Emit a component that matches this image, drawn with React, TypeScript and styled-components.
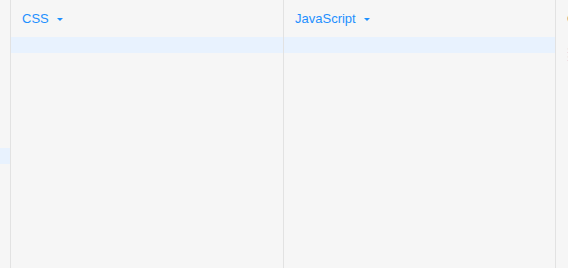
import React from 'react';
import styled, { createGlobalStyle } from 'styled-components';

const GlobalStyle = createGlobalStyle`
  html, body {
    margin: 0;
    padding: 0;
    background: #f6f6f6;
    font-family: "Liberation Sans", Arial, sans-serif;
    overflow: hidden;
  }
`;

const Board = styled.div`
  display: flex;
  width: 568px;
  height: 268px;
  overflow: hidden;
  background: #f6f6f6;
`;

const Strip = styled.div`
  flex: 0 0 10px;
  border-right: 1px solid #e2e2e2;
  display: flex;
  flex-direction: column;
  padding-top: 148px;
`;

const StripMark = styled.div`
  height: 16px;
  background: #e8f2fe;
`;

const Column = styled.div<{ $width: number }>`
  flex: 0 0 ${({ $width }) => $width}px;
  display: flex;
  flex-direction: column;
  border-right: 1px solid #e2e2e2;
  min-width: 0;
`;

const Header = styled.div`
  height: 37px;
  display: flex;
  align-items: center;
  gap: 8px;
  padding-left: 11px;
  font-size: 13px;
  color: #1e90ff;
  white-space: nowrap;
`;

const HeaderMuted = styled(Header)`
  color: #555;
`;

const Caret = styled.span`
  width: 0;
  height: 0;
  border-left: 3px solid transparent;
  border-right: 3px solid transparent;
  border-top: 3px solid #1e90ff;
  margin-top: 1px;
`;

const Row = styled.div<{ $active?: boolean }>`
  height: 16px;
  background: ${({ $active }) => ($active ? '#e8f2fe' : 'transparent')};
`;

const Notes = styled.div`
  display: flex;
  flex-direction: column;
  padding: 10px 0 0 11px;
  font-size: 8px;
  line-height: 8px;
  color: #9b8cc9;
  white-space: nowrap;
`;

export default function App() {
  return (
    <>
      <GlobalStyle />
      <Board>
        <Strip>
          <StripMark />
        </Strip>
        <Column $width={272}>
          <Header>
            CSS
            <Caret />
          </Header>
          <Row $active />
        </Column>
        <Column $width={271}>
          <Header>
            JavaScript
            <Caret />
          </Header>
          <Row $active />
        </Column>
        <Column $width={200}>
          <HeaderMuted>Commons</HeaderMuted>
          <Notes>
            <span>1</span>
            <span>1</span>
          </Notes>
        </Column>
      </Board>
    </>
  );
}
